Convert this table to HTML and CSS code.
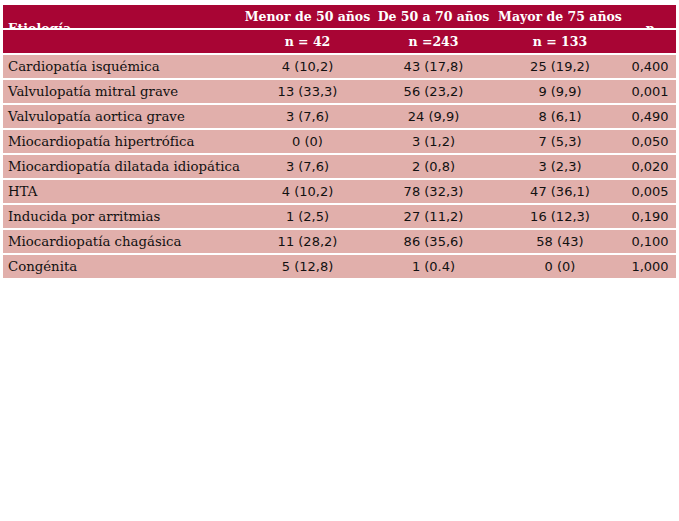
FILE: index.html
```html
<!DOCTYPE html>
<html lang="es">
<head>
<meta charset="utf-8">
<title>Etiología por grupo de edad</title>
<link rel="stylesheet" href="styles.css">
</head>
<body>
<table class="tabla">
  <colgroup>
    <col class="c-etiol">
    <col class="c-g1">
    <col class="c-g2">
    <col class="c-g3">
    <col class="c-p">
  </colgroup>
  <thead>
    <tr class="hrow">
      <th class="hcell hleft"><div class="clip"><span class="clip-text">Etiología</span></div></th>
      <th class="hcell">Menor de 50 años</th>
      <th class="hcell">De 50 a 70 años</th>
      <th class="hcell">Mayor de 75 años</th>
      <th class="hcell"><div class="clip"><span class="clip-text">p</span></div></th>
    </tr>
    <tr class="hrow">
      <th class="hcell"></th>
      <th class="hcell">n = 42</th>
      <th class="hcell">n =243</th>
      <th class="hcell">n = 133</th>
      <th class="hcell"></th>
    </tr>
  </thead>
  <tbody>
    <tr><td class="name">Cardiopatía isquémica</td><td class="num">4 (10,2)</td><td class="num">43 (17,8)</td><td class="num">25 (19,2)</td><td class="num">0,400</td></tr>
    <tr><td class="name">Valvulopatía mitral grave</td><td class="num">13 (33,3)</td><td class="num">56 (23,2)</td><td class="num">9 (9,9)</td><td class="num">0,001</td></tr>
    <tr><td class="name">Valvulopatía aortica grave</td><td class="num">3 (7,6)</td><td class="num">24 (9,9)</td><td class="num">8 (6,1)</td><td class="num">0,490</td></tr>
    <tr><td class="name">Miocardiopatía hipertrófica</td><td class="num">0 (0)</td><td class="num">3 (1,2)</td><td class="num">7 (5,3)</td><td class="num">0,050</td></tr>
    <tr><td class="name">Miocardiopatía dilatada idiopática</td><td class="num">3 (7,6)</td><td class="num">2 (0,8)</td><td class="num">3 (2,3)</td><td class="num">0,020</td></tr>
    <tr><td class="name">HTA</td><td class="num">4 (10,2)</td><td class="num">78 (32,3)</td><td class="num">47 (36,1)</td><td class="num">0,005</td></tr>
    <tr><td class="name">Inducida por arritmias</td><td class="num">1 (2,5)</td><td class="num">27 (11,2)</td><td class="num">16 (12,3)</td><td class="num">0,190</td></tr>
    <tr><td class="name">Miocardiopatía chagásica</td><td class="num">11 (28,2)</td><td class="num">86 (35,6)</td><td class="num">58 (43)</td><td class="num">0,100</td></tr>
    <tr><td class="name">Congénita</td><td class="num">5 (12,8)</td><td class="num">1 (0.4)</td><td class="num">0 (0)</td><td class="num">1,000</td></tr>
  </tbody>
</table>
</body>
</html>
```

FILE: styles.css
```css
html, body {
  margin: 0;
  padding: 0;
  background: #ffffff;
}

.tabla {
  margin: 3px 0 0 3px;
  width: 673px;
  table-layout: fixed;
  border-collapse: separate;
  border-spacing: 0 2px;
}

.c-etiol { width: 241px; }
.c-g1 { width: 127px; }
.c-g2 { width: 125px; }
.c-g3 { width: 128px; }
.c-p { width: 52px; }

.tabla th,
.tabla td {
  height: 23px;
  padding: 0;
  box-sizing: border-box;
  vertical-align: middle;
  white-space: nowrap;
}

.hcell {
  background: #a80534;
  color: #ffffff;
  font-family: "DejaVu Serif", serif;
  font-weight: bold;
  font-size: 12.5px;
  text-align: center;
  line-height: 23px;
}

.hleft {
  text-align: left;
  padding-left: 5px !important;
}

.clip {
  height: 23px;
  overflow: hidden;
}

.clip-text {
  display: block;
  padding-top: 12px;
  line-height: 23px;
}

.name {
  background: #e1afab;
  color: #111111;
  font-family: "DejaVu Serif", serif;
  font-size: 13.3px;
  padding-left: 5px !important;
  text-align: left;
}

.num {
  background: #e1afab;
  color: #111111;
  font-family: "DejaVu Sans", Verdana, sans-serif;
  font-size: 13px;
  text-align: center;
}
```
